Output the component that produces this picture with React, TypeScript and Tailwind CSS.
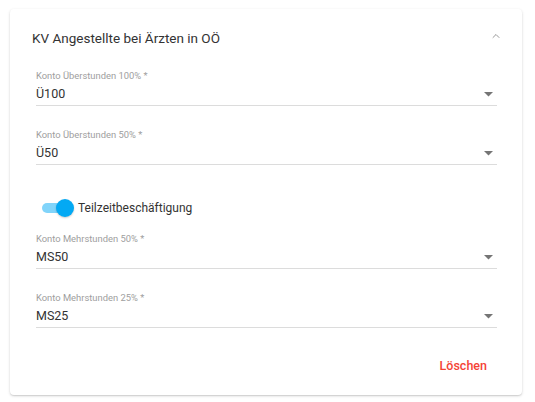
import { ChevronUp } from 'lucide-react'

const fields = [
  { label: 'Konto Überstunden 100% *', value: 'Ü100' },
  { label: 'Konto Überstunden 50% *', value: 'Ü50' },
]

const partTime = [
  { label: 'Konto Mehrstunden 50% *', value: 'MS50' },
  { label: 'Konto Mehrstunden 25% *', value: 'MS25' },
]

function SelectField({ label, value }: { label: string; value: string }) {
  return (
    <div>
      <div className="h-[11px] text-[9.4px] leading-[11px] text-[#9e9e9e]">{label}</div>
      <div className="mt-[5px] flex h-[16px] items-center justify-between">
        <span className="text-[12.5px] leading-[16px] text-[#333]">{value}</span>
        <svg width="9" height="5" viewBox="0 0 9 5" className="mr-[4px]">
          <path d="M0 0 L9 0 L4.5 4.5 Z" fill="#757575" />
        </svg>
      </div>
      <div className="mt-[3px] h-px bg-[#dcdcdc]" />
    </div>
  )
}

export default function App() {
  return (
    <div className="min-h-screen bg-white pl-[10px] pt-[9px]" style={{ fontFamily: 'Roboto, "Noto Sans", sans-serif' }}>
      <div className="flex h-[386px] w-[512px] flex-col rounded-[4px] bg-white shadow-[0_1px_3px_rgba(0,0,0,0.16),0_1px_1px_rgba(0,0,0,0.08)]">
        {/* header */}
        <div className="flex h-[58px] items-center justify-between pl-[22px] pr-[20px]">
          <h2 className="text-[13.5px] font-normal text-[#333]">KV Angestellte bei Ärzten in OÖ</h2>
          <ChevronUp size={12} strokeWidth={1.5} color="#757575" className="mb-[5px]" />
        </div>

        <div className="flex flex-col gap-[23px] pl-[26px] pr-[25px] pt-[3px]">
          {fields.map(f => (
            <SelectField key={f.label} label={f.label} value={f.value} />
          ))}
        </div>

        {/* switch */}
        <div className="mt-[33px] flex h-[20px] items-center gap-[6px] pl-[32px]">
          <div className="relative h-[10px] w-[30px]">
            <div className="absolute inset-0 rounded-full bg-[#81d4fa]" />
            <div className="absolute right-[-2px] top-[-4px] h-[18px] w-[18px] rounded-full bg-[#03a9f4] shadow-[0_1px_2px_rgba(0,0,0,0.2)]" />
          </div>
          <span className="text-[12px] text-[#333]">Teilzeitbeschäftigung</span>
        </div>

        <div className="flex flex-col gap-[23px] pl-[26px] pr-[25px] pt-[15px]">
          {partTime.map(f => (
            <SelectField key={f.label} label={f.label} value={f.value} />
          ))}
        </div>

        <div className="mt-[30px] flex justify-end pr-[35px]">
          <button className="text-[12.5px] font-medium leading-[16px] text-[#f44336]">Löschen</button>
        </div>
      </div>
    </div>
  )
}
